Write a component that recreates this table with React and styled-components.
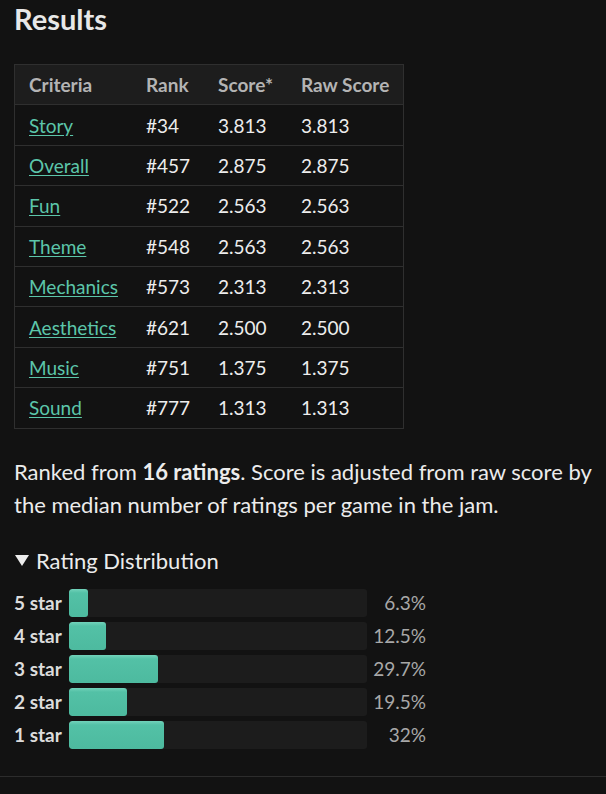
import React from "react";
import styled, { createGlobalStyle } from "styled-components";

const GlobalStyle = createGlobalStyle`
  html, body {
    margin: 0;
    background: #121212;
  }
  body {
    font-family: Lato, "Noto Sans", sans-serif;
    color: #e6e6e6;
  }
`;

const Page = styled.div`
  width: 606px;
  height: 794px;
  overflow: hidden;
`;

const Content = styled.div`
  padding: 0 14px;
  height: 777px;
  box-sizing: border-box;
  border-bottom: 1px solid #2c2c2c;
`;

const Title = styled.h2`
  margin: 0;
  padding-top: 1px;
  font-size: 29px;
  font-weight: 700;
  color: #e8e8e8;
  line-height: 36px;
`;

const Table = styled.table`
  margin-top: 27px;
  border-collapse: collapse;
  border: 1px solid #2f2f2f;
  font-size: 19px;
`;

const HeadCell = styled.th`
  background: #1d1d1d;
  color: #b4b4b4;
  font-weight: 700;
  text-align: left;
  height: 39.4px;
  padding: 0 14px;
  border-bottom: 1px solid #2f2f2f;
  white-space: nowrap;
`;

const Cell = styled.td`
  height: 39.4px;
  padding: 0 14px;
  color: #ededed;
  border-bottom: 1px solid #2f2f2f;
  white-space: nowrap;
`;

const CritLink = styled.a`
  color: #5cc6aa;
  text-decoration: underline;
  text-underline-offset: 2px;
`;

const Note = styled.p`
  margin: 26px 0 0;
  font-size: 22px;
  line-height: 33px;
  color: #ececec;
  b {
    font-weight: 700;
  }
`;

const Details = styled.div`
  margin-top: 25px;
`;

const Summary = styled.div`
  font-size: 22px;
  line-height: 30px;
  color: #ececec;
  display: flex;
  align-items: center;
`;

const Triangle = styled.span`
  width: 14px;
  height: 11px;
  margin: 0 7px 0 1px;
  background: #ececec;
  clip-path: polygon(0 0, 100% 0, 50% 100%);
`;

const Dist = styled.div`
  margin-top: 13px;
  display: grid;
  grid-template-columns: 55px 298px 59px;
  row-gap: 5px;
  align-items: center;
`;

const StarLabel = styled.div`
  font-size: 19px;
  font-weight: 700;
  color: #dcdcdc;
  white-space: nowrap;
`;

const Track = styled.div`
  height: 28px;
  background: #1c1c1c;
  border-radius: 3px;
  overflow: hidden;
`;

const Fill = styled.div`
  height: 100%;
  border-radius: 3px;
  background: linear-gradient(#72d2ba 0, #53c1a6 4px, #4dba9f 100%);
`;

const Pct = styled.div`
  font-size: 19px;
  color: #a8a8a8;
  text-align: right;
`;

const rows = [
  ["Story", "#34", "3.813", "3.813"],
  ["Overall", "#457", "2.875", "2.875"],
  ["Fun", "#522", "2.563", "2.563"],
  ["Theme", "#548", "2.563", "2.563"],
  ["Mechanics", "#573", "2.313", "2.313"],
  ["Aesthetics", "#621", "2.500", "2.500"],
  ["Music", "#751", "1.375", "1.375"],
  ["Sound", "#777", "1.313", "1.313"],
];

const dist = [
  ["5 star", 6.3, "6.3%"],
  ["4 star", 12.5, "12.5%"],
  ["3 star", 29.7, "29.7%"],
  ["2 star", 19.5, "19.5%"],
  ["1 star", 32, "32%"],
];

export default function App() {
  return (
    <Page>
      <GlobalStyle />
      <Content>
        <Title>Results</Title>
        <Table>
          <thead>
            <tr>
              <HeadCell>Criteria</HeadCell>
              <HeadCell>Rank</HeadCell>
              <HeadCell>Score*</HeadCell>
              <HeadCell>Raw Score</HeadCell>
            </tr>
          </thead>
          <tbody>
            {rows.map(([name, rank, score, raw]) => (
              <tr key={name}>
                <Cell>
                  <CritLink href="#">{name}</CritLink>
                </Cell>
                <Cell>{rank}</Cell>
                <Cell>{score}</Cell>
                <Cell>{raw}</Cell>
              </tr>
            ))}
          </tbody>
        </Table>
        <Note>
          Ranked from <b>16 ratings</b>. Score is adjusted from raw score by
          the median number of ratings per game in the jam.
        </Note>
        <Details>
          <Summary>
            <Triangle />
            Rating Distribution
          </Summary>
          <Dist>
            {dist.map(([label, value, text]) => (
              <React.Fragment key={label}>
                <StarLabel>{label}</StarLabel>
                <Track>
                  <Fill style={{ width: `${value}%` }} />
                </Track>
                <Pct>{text}</Pct>
              </React.Fragment>
            ))}
          </Dist>
        </Details>
      </Content>
    </Page>
  );
}
